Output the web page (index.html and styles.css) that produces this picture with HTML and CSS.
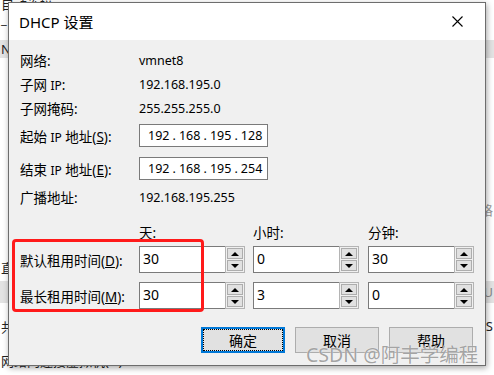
FILE: index.html
```html
<!doctype html>
<html lang="zh">
<head>
<meta charset="utf-8">
<title>DHCP 设置</title>
<link rel="stylesheet" href="styles.css">
</head>
<body>
<div class="desk">
  <div class="backwin">
    <div class="brow b1"><span>自动连接</span><span></span></div>
    <div class="brow b2"><span>_</span><span></span></div>
    <div class="brow b3 grey"><span>NAT</span><span></span></div>
    <div class="brow b4"><span></span><span>格</span></div>
    <div class="brow b5"><span>直</span><span></span></div>
    <div class="brow b6 grey"><span></span><span>U</span></div>
    <div class="brow b7"><span>共</span><span>S</span></div>
    <div class="brow b8"><span>网络内连接虚拟机(H)</span><span></span></div>
  </div>

  <div class="dialog">
    <div class="titlebar">
      <span class="title">DHCP 设置</span>
      <svg class="close" width="11" height="11" viewBox="0 0 11 11"><path d="M0.5 0.5 L10.5 10.5 M10.5 0.5 L0.5 10.5" stroke="#000" stroke-width="1.1" fill="none"/></svg>
    </div>
    <div class="body">
      <div class="row r-info"><span class="lbl">网络:</span><span class="val">vmnet8</span></div>
      <div class="row r-info"><span class="lbl">子网 <span class="lat">IP</span>:</span><span class="val">192.168.195.0</span></div>
      <div class="row r-info"><span class="lbl">子网掩码:</span><span class="val">255.255.255.0</span></div>
      <div class="row r-ip1"><span class="lbl">起始 <span class="lat">IP</span> 地址(<u>S</u>):</span>
        <div class="ip"><span>192</span><i>.</i><span>168</span><i>.</i><span>195</span><i>.</i><span>128</span></div></div>
      <div class="row r-ip2"><span class="lbl">结束 <span class="lat">IP</span> 地址(<u>E</u>):</span>
        <div class="ip"><span>192</span><i>.</i><span>168</span><i>.</i><span>195</span><i>.</i><span>254</span></div></div>
      <div class="row r-bc"><span class="lbl">广播地址:</span><span class="val">192.168.195.255</span></div>

      <div class="grid r-hdr">
        <span></span><span class="hd">天:</span><span class="hd">小时:</span><span class="hd">分钟:</span>
      </div>
      <div class="grid r-spin">
        <span class="lbl">默认租用时间(<u>D</u>):</span>
        <div class="spin"><div class="field">30</div><div class="arrows"><b class="up"></b><b class="dn"></b></div></div>
        <div class="spin"><div class="field">0</div><div class="arrows"><b class="up"></b><b class="dn"></b></div></div>
        <div class="spin"><div class="field">30</div><div class="arrows"><b class="up"></b><b class="dn"></b></div></div>
      </div>
      <div class="grid r-spin r-spin2">
        <span class="lbl">最长租用时间(<u>M</u>):</span>
        <div class="spin"><div class="field">30</div><div class="arrows"><b class="up"></b><b class="dn"></b></div></div>
        <div class="spin"><div class="field">3</div><div class="arrows"><b class="up"></b><b class="dn"></b></div></div>
        <div class="spin"><div class="field">0</div><div class="arrows"><b class="up"></b><b class="dn"></b></div></div>
      </div>

      <div class="buttons">
        <button class="btn focus"><span>确定</span></button>
        <button class="btn">取消</button>
        <button class="btn">帮助</button>
      </div>
    </div>
    <div class="mark"></div>
  </div>

  <div class="watermark">CSDN @阿丰学编程</div>
</div>
</body>
</html>
```

FILE: styles.css
```css
body{margin:0;}
.desk{position:relative;width:494px;height:375px;overflow:hidden;background:#fff;
  font-family:"Noto Sans","Noto Sans CJK SC",sans-serif;font-size:13px;color:#000;}

/* window behind the dialog */
.backwin{display:flex;flex-direction:column;font-size:13px;color:#222;}
.brow{display:flex;justify-content:space-between;align-items:center;padding:0 1px;}
.brow.grey{background:#e3e3e3;}
.b1{height:14px;margin-top:-4px;}
.b2{height:22px;align-items:flex-start;}
.b3{height:18px;margin-top:8px;}
.b4{height:18px;margin-top:142px;color:#999;}
.b5{height:18px;margin-top:40px;}
.b6{height:22px;margin-top:5px;color:#888;}
.b7{height:22px;margin-top:12px;}
.b8{height:22px;margin-top:12px;}

/* dialog */
.dialog{position:absolute;left:8px;top:2px;width:478px;height:364px;box-sizing:border-box;
  border:1px solid #6d6d6d;background:#f0f0f0;box-shadow:1px 2px 6px rgba(0,0,0,.35);
  display:flex;flex-direction:column;}
.titlebar{height:37px;flex:none;background:#fff;display:flex;align-items:center;
  justify-content:space-between;padding:0 22px 0 10px;}
.title{font-size:15px;}
.close{display:block;}

.body{padding:8px 12px 0 11px;}
.row{display:flex;align-items:center;}
.lbl{width:119px;flex:none;white-space:nowrap;font-size:13.5px;}
.lat{font-size:12px;}
.val{font-size:12.5px;}
.r-info{height:24px;}
.r-ip1{height:31px;}
.r-ip2{height:35px;}
.r-bc{height:22px;}

.ip{width:129px;height:23px;box-sizing:border-box;border:1px solid #7a7a7a;background:#fff;
  display:flex;align-items:center;padding-left:8px;font-size:12.5px;}
.ip i{font-style:normal;width:9.5px;text-align:center;}

.grid{display:grid;grid-template-columns:119px 114px 115px 106px;align-items:center;}
.r-hdr{height:20px;margin-top:14px;}
.hd{font-size:13.5px;}
.r-spin{height:35px;}
.r-spin2{margin-top:1px;}

.spin{display:flex;width:106px;height:27px;}
.field{flex:1;box-sizing:border-box;border:1px solid #7a7a7a;border-right:none;background:#fff;
  padding:2px 0 0 3px;font-size:14px;line-height:20px;}
.arrows{width:20px;box-sizing:border-box;border:1px solid #b4b4b4;display:flex;flex-direction:column;
  gap:1px;padding:1px;background:#f0f0f0;}
.arrows b{flex:1;background:#e1e1e1;border:1px solid #adadad;display:flex;align-items:center;justify-content:center;}
.arrows b::after{content:"";border-left:4px solid transparent;border-right:4px solid transparent;}
.arrows .up::after{border-bottom:4px solid #000;}
.arrows .dn::after{border-top:4px solid #000;}

.buttons{display:flex;justify-content:flex-end;gap:10px;margin-top:14px;}
.btn{width:84px;height:26px;box-sizing:border-box;border:1px solid #adadad;background:#e1e1e1;
  font-family:inherit;font-size:14px;padding:0;color:#000;}
.btn.focus{border:2px solid #0078d7;padding:1px;}
.btn.focus span{display:flex;align-items:center;justify-content:center;height:100%;
  outline:1px dotted #000;}

/* annotation over the dialog */
.mark{position:absolute;left:3px;top:236px;width:192px;height:73px;box-sizing:border-box;
  border:3px solid #ff1a1a;border-radius:4px;}

.watermark{position:absolute;left:306px;top:339px;font-size:19.5px;color:rgba(140,140,140,.8);
  white-space:nowrap;text-shadow:0 0 1px #fff;}
```
